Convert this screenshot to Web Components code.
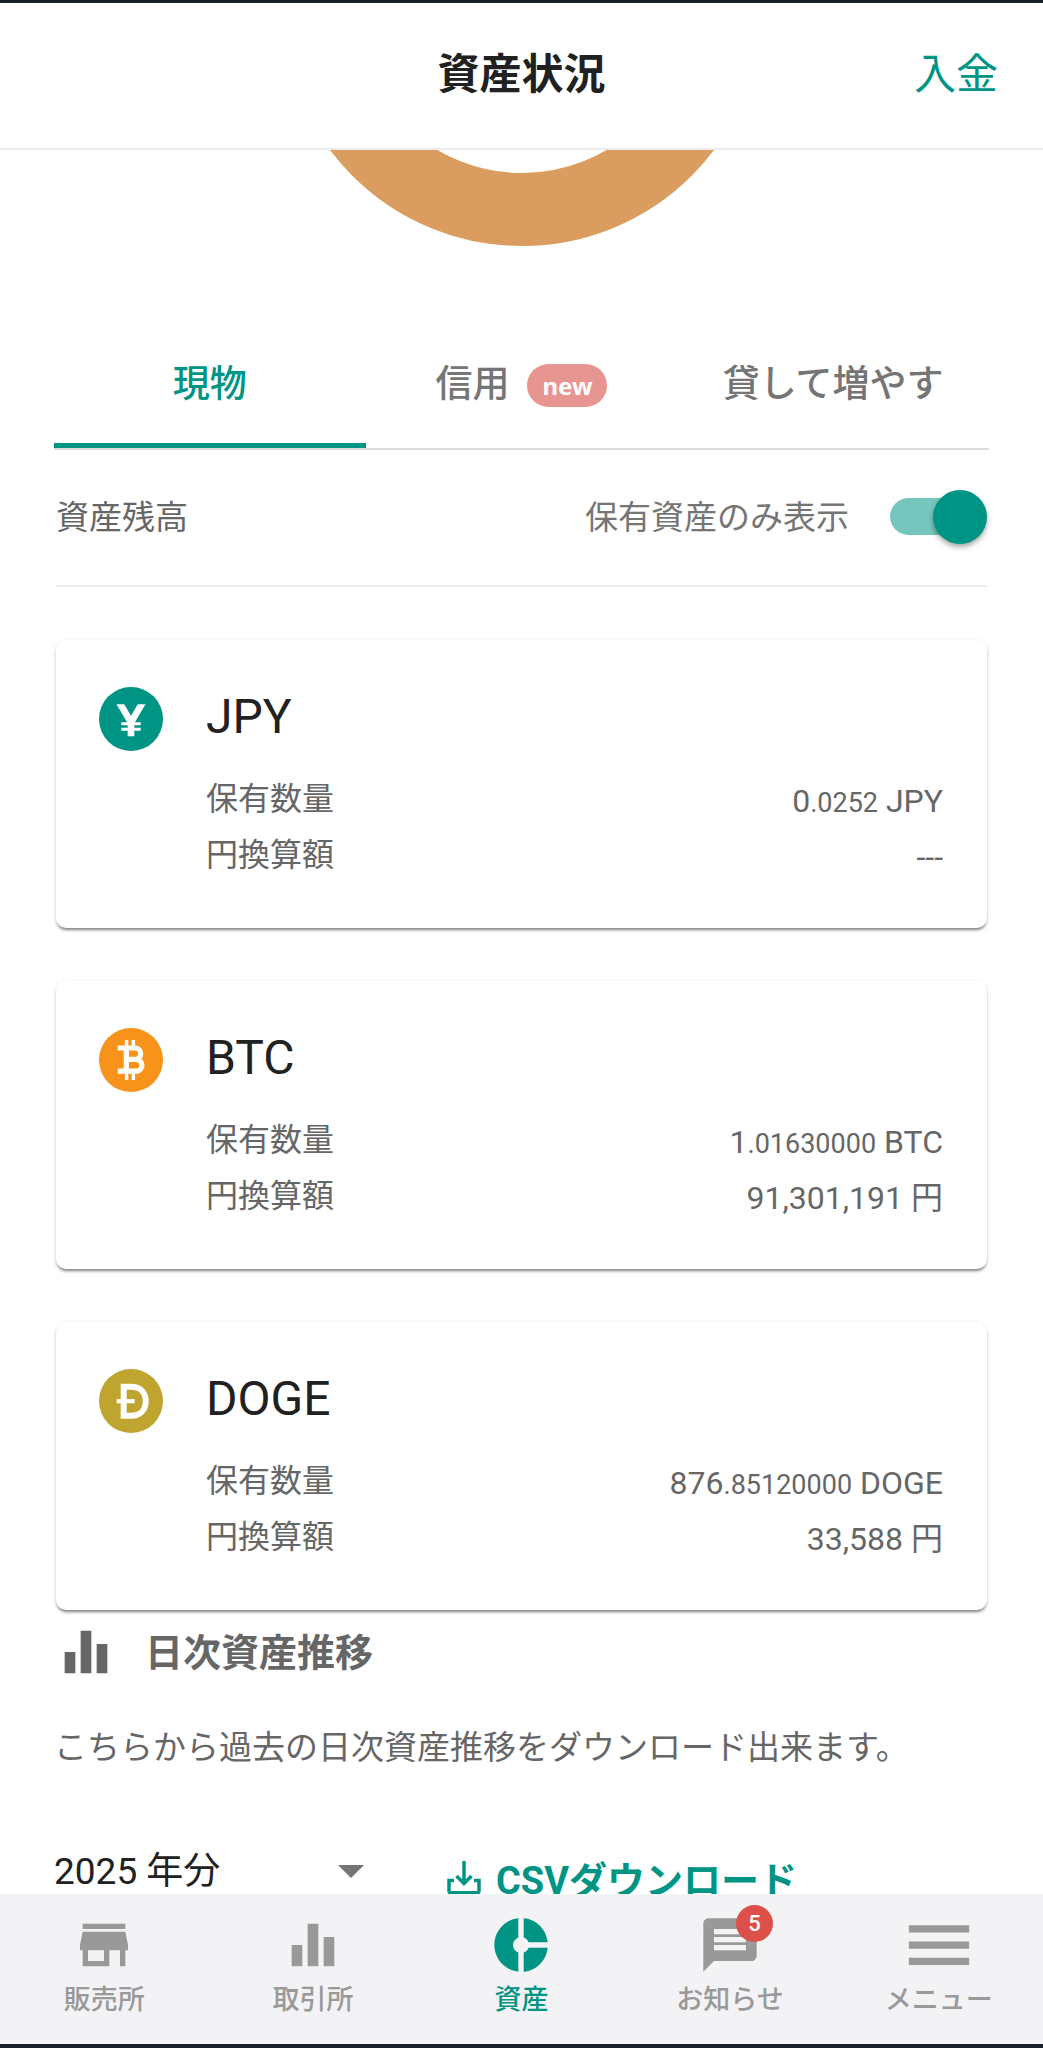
<!DOCTYPE html>
<html lang="ja">
<head>
<meta charset="utf-8">
<meta name="viewport" content="width=device-width, initial-scale=1">
<title>資産状況</title>
<style>
  :root {
    --primary: #009485;
    --primary-light: #77c6be;
    --text: #212121;
    --muted: #666666;
    --line: #ececec;
  }
  body {
    margin: 0;
    background: #ffffff;
    color: var(--muted);
    font-family: Roboto, "Noto Sans CJK JP", sans-serif;
  }
</style>
</head>
<body>
<asset-app>
  <app-header slot="header">
    資産状況
    <a slot="action" href="#deposit">入金</a>
  </app-header>

  <donut-chart></donut-chart>

  <tab-bar>
    <tab-item active>現物</tab-item>
    <tab-item badge="new">信用</tab-item>
    <tab-item>貸して増やす</tab-item>
  </tab-bar>

  <balance-filter label="保有資産のみ表示">資産残高</balance-filter>

  <asset-list>
    <asset-card symbol="JPY" amount="0.0252"></asset-card>
    <asset-card symbol="BTC" amount="1.01630000" value="91,301,191"></asset-card>
    <asset-card symbol="DOGE" amount="876.85120000" value="33,588"></asset-card>
  </asset-list>

  <daily-report year="2025">
    <span slot="title">日次資産推移</span>
    こちらから過去の日次資産推移をダウンロード出来ます。
  </daily-report>

  <bottom-nav slot="nav">
    <nav-item icon="store" href="#sales">販売所</nav-item>
    <nav-item icon="bars" href="#exchange">取引所</nav-item>
    <nav-item icon="donut" href="#assets" active>資産</nav-item>
    <nav-item icon="message" href="#news" badge="5">お知らせ</nav-item>
    <nav-item icon="menu" href="#menu">メニュー</nav-item>
  </bottom-nav>
</asset-app>

<script>
const ICONS = {
  store: '<path d="M20 4H4v2h16V4zm1 10v-2l-1-5H4l-1 5v2h1v6h10v-6h4v6h2v-6h1zm-9 4H6v-4h6v4z"/>',
  bars: '<path d="M10 20h4V4h-4v16zm-6 0h4v-8H4v8zM16 9v11h4V9h-4z"/>',
  donut: '<path d="M11 9.16V2c-5 .5-9 4.79-9 10s4 9.5 9 10v-7.16c-1-.41-2-1.52-2-2.84s1-2.43 2-2.84zM14.86 11H22c-.48-4.75-4-8.53-9-9v7.16c1 .3 1.52.98 1.86 1.84zM13 14.84V22c5-.47 8.52-4.25 9-9h-7.14c-.34.86-.86 1.54-1.86 1.84z"/>',
  message: '<path d="M20 2H4c-1.1 0-1.99.9-1.99 2L2 22l4-4h14c1.1 0 2-.9 2-2V4c0-1.1-.9-2-2-2zm-2 12H6v-2h12v2zm0-3H6V9h12v2zm0-3H6V6h12v2z"/>',
  menu: '<path d="M.7 4.6h22.6v2.7H.7zM.7 10.7h22.6v2.7H.7zM.7 16.8h22.6v2.7H.7z"/>'
};

const COINS = {
  JPY: `
    <circle cx="32" cy="32" r="32" fill="#009485"/>
    <g fill="none" stroke="#fff">
      <path stroke-width="6.6" d="M19.5 14L32 35.5L44.5 14M32 33v16.3"/>
      <path stroke-width="2.9" d="M22.3 36.7h19.4M22.3 42.3h19.4"/>
    </g>
    <path fill="#009485" d="M14 9h36v8.3H14z"/>`,
  BTC: `
    <circle cx="32" cy="32" r="32" fill="#f7931a"/>
    <g fill="none" stroke="#fff">
      <path stroke-width="5.2" d="M18.7 20H36a5.6 5.6 0 0 1 0 11.4H27H38a6 6 0 0 1 0 11.8H18.7M27.3 20v23"/>
      <path stroke-width="3.4" d="M27.6 12v6M34.4 12v6M27.6 45v7M34.4 45v7"/>
    </g>`,
  DOGE: `
    <circle cx="32" cy="32" r="32" fill="#bfa430"/>
    <g fill="none" stroke="#fff">
      <path stroke-width="6" d="M24.7 17.7h7.3c9.5 0 14.7 6 14.7 14.5s-5.2 14.5-14.7 14.5h-7.3z"/>
      <path stroke-width="4.2" d="M17.7 32.2h18"/>
    </g>`
};

function icon(name) {
  return `<svg viewBox="0 0 24 24" width="64" height="64" fill="currentColor" aria-hidden="true">${ICONS[name]}</svg>`;
}

// Attaches an open shadow root once and fills it from template()
class BaseElement extends HTMLElement {
  connectedCallback() {
    if (!this.shadowRoot) {
      this.attachShadow({ mode: 'open' });
    }
    this.shadowRoot.innerHTML = this.template();
  }
}

class AssetApp extends BaseElement {
  template() {
    return `
      <style>
        :host {
          display: flex;
          flex-direction: column;
          height: 100vh;
          box-sizing: border-box;
          border-top: 3px solid #18202c;
          border-bottom: 4px solid #1a1f2e;
        }
        main {
          flex: 1;
          min-height: 0;
          overflow: hidden;
          padding: 0 54px;
        }
      </style>
      <slot name="header"></slot>
      <main><slot></slot></main>
      <slot name="nav"></slot>
    `;
  }
}

class AppHeader extends BaseElement {
  template() {
    return `
      <style>
        :host { display: block; border-bottom: 2px solid var(--line); }
        header {
          display: grid;
          grid-template-columns: 1fr auto 1fr;
          align-items: center;
          height: 135px;
          padding: 0 45px 10px;
        }
        h1 {
          grid-column: 2;
          margin: 0;
          font-size: 42px;
          font-weight: 700;
          color: var(--text);
        }
        .action { justify-self: end; font-size: 42px; }
        ::slotted(a) { color: var(--primary); text-decoration: none; }
      </style>
      <header>
        <h1><slot></slot></h1>
        <div class="action"><slot name="action"></slot></div>
      </header>
    `;
  }
}

class DonutChart extends BaseElement {
  template() {
    return `
      <style>
        :host { display: flex; justify-content: center; }
      </style>
      <svg width="480" height="96" viewBox="0 0 480 96" role="img" aria-label="資産構成">
        <circle cx="240" cy="-144" r="203.5" fill="none" stroke="#db9c5f" stroke-width="73"/>
      </svg>
    `;
  }
}

class TabBar extends BaseElement {
  template() {
    return `
      <style>
        :host {
          display: grid;
          grid-template-columns: repeat(3, 1fr);
          margin-top: 70px;
          border-bottom: 2px solid #d9dbdf;
        }
      </style>
      <slot></slot>
    `;
  }
}

class TabItem extends BaseElement {
  template() {
    const badge = this.getAttribute('badge');
    return `
      <style>
        :host { display: block; }
        button {
          display: flex;
          align-items: center;
          justify-content: center;
          gap: 18px;
          width: 100%;
          height: 132px;
          padding: 0 0 2px;
          border: none;
          background: none;
          color: #757575;
          font: 500 37px Roboto, "Noto Sans CJK JP", sans-serif;
          cursor: pointer;
        }
        :host([active]) button {
          color: var(--primary);
          box-shadow: inset 0 -5px var(--primary);
        }
        .badge {
          margin-top: 8px;
          padding: 0 15px;
          border-radius: 22px;
          background: #e69591;
          color: #ffffff;
          font: 700 24px/43px "Noto Sans", sans-serif;
        }
      </style>
      <button type="button">
        <span><slot></slot></span>
        ${badge ? `<span class="badge">${badge}</span>` : ''}
      </button>
    `;
  }
}

class BalanceFilter extends BaseElement {
  template() {
    return `
      <style>
        :host {
          display: flex;
          align-items: center;
          justify-content: space-between;
          height: 133px;
          margin: 0 2px;
          padding-bottom: 2px;
          border-bottom: 2px solid var(--line);
          font-size: 33px;
        }
        span { padding-bottom: 4px; }
        label { display: flex; align-items: center; gap: 41px; color: #757575; }
        input {
          appearance: none;
          display: grid;
          align-items: center;
          width: 97px;
          height: 54px;
          margin: 0;
          cursor: pointer;
        }
        input::before, input::after { content: ""; grid-area: 1 / 1; }
        input::before {
          width: 90px;
          height: 37px;
          border-radius: 19px;
          background: #bdbdbd;
        }
        input::after {
          width: 54px;
          height: 54px;
          border-radius: 50%;
          background: #fafafa;
          box-shadow: 0 3px 5px rgba(0, 0, 0, 0.35);
        }
        input:checked::before { background: var(--primary-light); }
        input:checked::after { justify-self: end; background: var(--primary); }
      </style>
      <span><slot></slot></span>
      <label><span>${this.getAttribute('label')}</span><input type="checkbox" checked></label>
    `;
  }
}

class AssetList extends BaseElement {
  template() {
    return `
      <style>
        :host {
          display: flex;
          flex-direction: column;
          gap: 53px;
          margin: 53px 2px 0;
        }
      </style>
      <slot></slot>
    `;
  }
}

class AssetCard extends BaseElement {
  template() {
    const symbol = this.getAttribute('symbol');
    const value = this.getAttribute('value');
    const [whole, decimals] = this.getAttribute('amount').split('.');
    return `
      <style>
        :host {
          display: grid;
          grid-template-columns: 64px 1fr;
          column-gap: 43px;
          row-gap: 20px;
          padding: 47px 44px 45px 43px;
          border-radius: 10px;
          background: #ffffff;
          box-shadow: 0 3px 3px -1px rgba(0, 0, 0, 0.45), 0 1px 5px rgba(0, 0, 0, 0.1);
        }
        svg { display: block; }
        h2 {
          margin: 0;
          font-size: 48px;
          line-height: 60px;
          font-weight: 400;
          color: var(--text);
        }
        dl {
          grid-column: 2;
          margin: 0;
          font-size: 32px;
          line-height: 56px;
        }
        dl div { display: flex; justify-content: space-between; height: 56px; }
        dd { margin: 0; padding-top: 2px; }
        small { font-size: 27px; }
      </style>
      <svg width="64" height="64" viewBox="0 0 64 64" aria-hidden="true">${COINS[symbol]}</svg>
      <h2>${symbol}</h2>
      <dl>
        <div><dt>保有数量</dt><dd>${whole}<small>.${decimals}</small> ${symbol}</dd></div>
        <div><dt>円換算額</dt><dd>${value ? `${value} 円` : '---'}</dd></div>
      </dl>
    `;
  }
}

class DailyReport extends BaseElement {
  template() {
    const year = Number(this.getAttribute('year'));
    return `
      <style>
        :host { display: block; margin-top: 10px; }
        svg { display: block; }
        .title { display: flex; align-items: center; gap: 27px; }
        h2 { margin: 0; padding-top: 2px; font-size: 38px; line-height: 60px; font-weight: 700; }
        p { margin: 40px 0 0; font-size: 33px; line-height: 48px; }
        form { display: flex; align-items: flex-start; gap: 80px; margin-top: 69px; }
        .year { display: grid; align-items: center; width: 313px; }
        .year > * { grid-area: 1 / 1; }
        select {
          appearance: none;
          width: 100%;
          height: 60px;
          padding: 0;
          border: none;
          background: none;
          color: var(--text);
          font: 400 37px Roboto, "Noto Sans CJK JP", sans-serif;
        }
        .year svg { justify-self: end; margin-right: 3px; pointer-events: none; }
        a {
          display: flex;
          align-items: flex-start;
          gap: 15px;
          margin-top: 10px;
          color: var(--primary);
          font-size: 38px;
          line-height: 60px;
          font-weight: 700;
          text-decoration: none;
        }
        a svg { margin-top: 10px; }
      </style>
      <div class="title">${icon('bars')}<h2><slot name="title"></slot></h2></div>
      <p><slot></slot></p>
      <form>
        <div class="year">
          <select aria-label="対象年">
            <option selected>${year} 年分</option>
            <option>${year - 1} 年分</option>
          </select>
          <svg width="26" height="13" viewBox="0 0 26 13" aria-hidden="true">
            <path fill="#757575" d="M0 0h26L13 13z"/>
          </svg>
        </div>
        <a href="#csv" download>
          <svg width="34" height="34" viewBox="0 0 34 34" fill="none" stroke="currentColor" stroke-width="3.5" aria-hidden="true">
            <path d="M17 0v22M9.5 15l7.5 7.5 7.5-7.5M7 19.5H2V30q0 1.7 1.7 1.7h26.6q1.7 0 1.7-1.7V19.5h-5"/>
          </svg>
          <span>CSVダウンロード</span>
        </a>
      </form>
    `;
  }
}

class BottomNav extends BaseElement {
  template() {
    return `
      <style>
        :host { display: block; background: #f3f3f5; }
        nav {
          display: grid;
          grid-template-columns: repeat(5, 1fr);
          height: 150px;
        }
      </style>
      <nav><slot></slot></nav>
    `;
  }
}

class NavItem extends BaseElement {
  template() {
    const badge = this.getAttribute('badge');
    return `
      <style>
        :host { display: block; color: #999999; }
        :host([active]) { color: var(--primary); }
        a {
          display: flex;
          flex-direction: column;
          align-items: center;
          padding-top: 19px;
          color: inherit;
          font-size: 27px;
          line-height: 40px;
          font-weight: 500;
          text-decoration: none;
        }
        svg { display: block; }
        .icon { position: relative; margin-bottom: 3px; }
        .badge {
          position: absolute;
          top: -8px;
          right: -11px;
          width: 37px;
          border-radius: 50%;
          background: #dd5049;
          color: #ffffff;
          font-size: 22px;
          line-height: 37px;
          text-align: center;
        }
      </style>
      <a href="${this.getAttribute('href')}">
        <span class="icon">
          ${icon(this.getAttribute('icon'))}
          ${badge ? `<span class="badge">${badge}</span>` : ''}
        </span>
        <span><slot></slot></span>
      </a>
    `;
  }
}

customElements.define('asset-app', AssetApp);
customElements.define('app-header', AppHeader);
customElements.define('donut-chart', DonutChart);
customElements.define('tab-bar', TabBar);
customElements.define('tab-item', TabItem);
customElements.define('balance-filter', BalanceFilter);
customElements.define('asset-list', AssetList);
customElements.define('asset-card', AssetCard);
customElements.define('daily-report', DailyReport);
customElements.define('bottom-nav', BottomNav);
customElements.define('nav-item', NavItem);
</script>
</body>
</html>
